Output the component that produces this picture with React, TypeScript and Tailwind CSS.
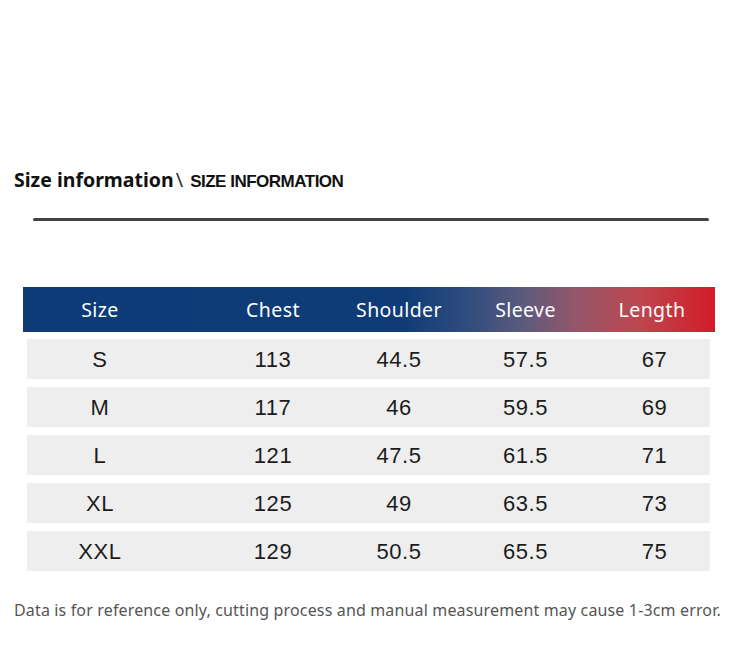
const rows = [
  ["S", "113", "44.5", "57.5", "67"],
  ["M", "117", "46", "59.5", "69"],
  ["L", "121", "47.5", "61.5", "71"],
  ["XL", "125", "49", "63.5", "73"],
  ["XXL", "129", "50.5", "65.5", "75"],
];

const headers = ["Size", "Chest", "Shoulder", "Sleeve", "Length"];

export default function App() {
  return (
    <div className="w-[750px] h-[657px] bg-white overflow-hidden">
      {/* Title */}
      <div className="pt-[165px] pl-[14px] flex items-baseline">
        <h1 className="font-['Noto_Sans',sans-serif] font-bold text-[19.5px] leading-[28px] text-[#111]">
          Size information
        </h1>
        <span className="font-['Noto_Sans',sans-serif] text-[20px] text-[#333] ml-[2px]">\</span>
        <span className="font-['Liberation_Sans',Arial,sans-serif] font-bold text-[17px] tracking-[-0.5px] text-[#111] ml-[7px]">
          SIZE INFORMATION
        </span>
      </div>

      {/* Divider */}
      <div className="mt-[23px] ml-[33px] w-[676px] h-[3px] bg-[#444] rounded-full" />

      {/* Table */}
      <div className="mt-[66px] ml-[23px] w-[692px]">
        <div className="h-[45px] grid grid-cols-[187px_126px_126px_127px_126px] items-center text-white font-['Noto_Sans',sans-serif] text-[19.5px] tracking-[0.4px] bg-[linear-gradient(90deg,#0d3b77_0%,#0f3c77_55%,#2f4c7e_64%,#5a5a7e_72%,#96566a_80%,#bd474e_89%,#d31c29_100%)]">
          {headers.map((h, i) => (
            <div key={h} className={i === 0 ? "text-center pr-[33px]" : "text-center"}>
              {h}
            </div>
          ))}
        </div>
        <div className="mt-[7px] flex flex-col gap-[8px] ml-[4px] w-[683px]">
          {rows.map((r) => (
            <div
              key={r[0]}
              className="h-[40px] bg-[#efeeef] grid grid-cols-[183px_126px_126px_127px_121px] items-center font-['Liberation_Sans',Arial,sans-serif] text-[22px] tracking-[0.6px] text-[#1c1c1c]"
            >
              {r.map((v, i) => (
                <div
                  key={i}
                  className={i === 0 ? "text-center pr-[37px]" : i === 4 ? "text-center pl-[10px]" : "text-center"}
                >
                  {v}
                </div>
              ))}
            </div>
          ))}
        </div>
      </div>

      {/* Note */}
      <p className="mt-[27px] pl-[14px] font-['Noto_Sans',sans-serif] text-[16px] tracking-[0.15px] text-[#555] whitespace-nowrap">
        Data is for reference only, cutting process and manual measurement may cause 1-3cm error.
      </p>
    </div>
  );
}
